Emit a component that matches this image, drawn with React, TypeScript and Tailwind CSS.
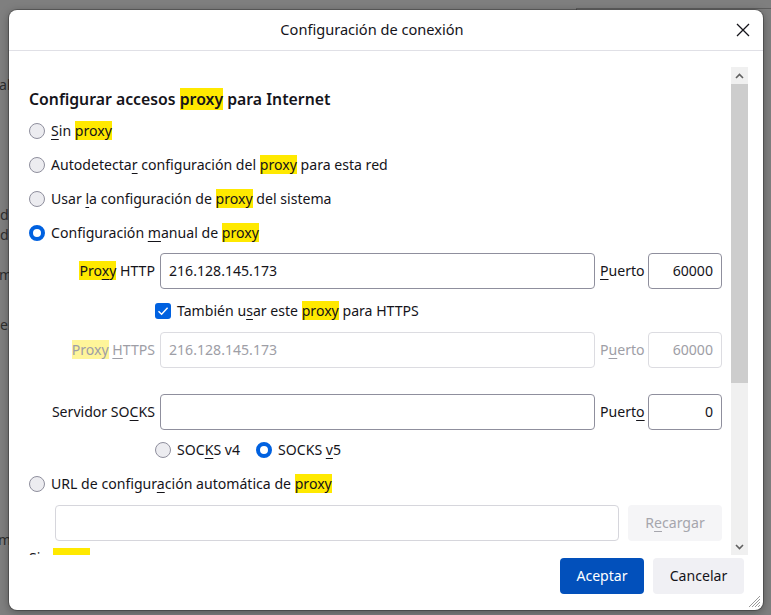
import React from "react";

const font = { fontFamily: '"Noto Sans", "Open Sans", sans-serif' };

function Hl({ children, pale }: { children: React.ReactNode; pale?: boolean }) {
  return <span className={pale ? "bg-[#fff59a]" : "bg-[#ffe900]"}>{children}</span>;
}

function K({ children }: { children: React.ReactNode }) {
  return <span className="underline underline-offset-[3px] decoration-1">{children}</span>;
}

function Radio({ checked }: { checked?: boolean }) {
  return checked ? (
    <span className="box-border h-4 w-4 shrink-0 rounded-full border-[4px] border-[#0061e0] bg-white" />
  ) : (
    <span className="box-border h-4 w-4 shrink-0 rounded-full border border-[#8f8f9d] bg-[#ececf0]" />
  );
}

function RadioRow({ checked, children, className = "" }: { checked?: boolean; children: React.ReactNode; className?: string }) {
  return (
    <div className={`flex h-6 items-center gap-[6px] ${className}`}>
      <Radio checked={checked} />
      <span className="leading-6">{children}</span>
    </div>
  );
}

function Field({ value, disabled, right }: { value?: string; disabled?: boolean; right?: boolean }) {
  return (
    <div
      className={`flex h-9 items-center rounded-[4px] border px-2 ${right ? "justify-end" : ""} ${
        disabled ? "border-[#dcdce1] text-[#9e9ea6]" : "border-[#8f8f9d] text-[#15141a]"
      }`}
    >
      {value}
    </div>
  );
}

function ProxyRow({
  label,
  value,
  port,
  portLabel,
  disabled,
  className = "",
}: {
  label: React.ReactNode;
  value?: string;
  port: string;
  portLabel: React.ReactNode;
  disabled?: boolean;
  className?: string;
}) {
  return (
    <div className={`flex items-center gap-[5px] ${className} ${disabled ? "text-[#9e9ea6]" : ""}`}>
      <div className="w-[126px] shrink-0 text-right whitespace-nowrap">{label}</div>
      <div className="flex-1">
        <Field value={value} disabled={disabled} />
      </div>
      <div className="w-[43px] shrink-0 whitespace-nowrap">{portLabel}</div>
      <div className="w-[74px] shrink-0">
        <Field value={port} disabled={disabled} right />
      </div>
    </div>
  );
}

export default function App() {
  return (
    <div className="relative h-[615px] w-[771px] overflow-hidden bg-[#7f7f7f] text-[14.1px] text-[#15141a]" style={font}>
      {/* page behind the dialog */}
      <div className="absolute left-[576px] right-0 top-[8px] h-[40px] border-t border-l border-[#5e5e5e]" />
      <div className="text-[#2e2e2e]">
        <span className="absolute left-[-1px] top-[74px]">al</span>
        <span className="absolute left-0 top-[204px]">d.</span>
        <span className="absolute left-0 top-[224px]">da</span>
        <span className="absolute left-[-1px] top-[264px]">mi</span>
        <span className="absolute left-0 top-[314px]">e</span>
        <span className="absolute left-[-2px] top-[529px]">m</span>
        <span className="absolute left-[14px] top-[566px]">c</span>
      </div>

      {/* dialog */}
      <div className="absolute left-[9px] top-[10px] flex h-[600px] w-[754px] flex-col rounded-lg bg-white shadow-[0_0_0_1px_rgba(0,0,0,0.25),0_2px_10px_rgba(0,0,0,0.35)]">
        <div className="relative flex h-[41px] shrink-0 items-center justify-center border-b border-[#e0e0e6] pr-[28px]">
          <span className="text-[14.6px]">Configuración de conexión</span>
          <button className="absolute right-[12px] top-[12px] flex h-4 w-4 items-center justify-center">
            <svg width="14" height="14" viewBox="0 0 14 14" fill="none" stroke="#15141a" strokeWidth="1.3">
              <path d="M1 1 L13 13 M13 1 L1 13" />
            </svg>
          </button>
        </div>

        <div className="flex h-[504px] shrink-0 overflow-hidden">
          <div className="flex-1 overflow-hidden pl-5 pr-[9px] pt-9">
            <h1 className="h-6 text-[15.8px] font-semibold leading-6">
              Configurar accesos <Hl>proxy</Hl> para Internet
            </h1>
            <RadioRow className="mt-2">
              <K>S</K>in <Hl>proxy</Hl>
            </RadioRow>
            <RadioRow className="mt-[10px]">
              Autodetecta<K>r</K> configuración del <Hl>proxy</Hl> para esta red
            </RadioRow>
            <RadioRow className="mt-[10px]">
              Usar <K>l</K>a configuración de <Hl>proxy</Hl> del sistema
            </RadioRow>
            <RadioRow checked className="mt-[10px]">
              Configuración <K>m</K>anual de <Hl>proxy</Hl>
            </RadioRow>

            <ProxyRow
              className="mt-2"
              label={
                <>
                  <Hl>
                    Pro<K>x</K>y
                  </Hl>{" "}
                  HTTP
                </>
              }
              value="216.128.145.173"
              portLabel={
                <>
                  <K>P</K>uerto
                </>
              }
              port="60000"
            />

            <div className="mt-[10px] flex h-6 items-center gap-[6px] pl-[126px]">
              <span className="flex h-4 w-4 shrink-0 items-center justify-center rounded-[3px] bg-[#0061e0]">
                <svg width="12" height="12" viewBox="0 0 12 12" fill="none" stroke="white" strokeWidth="1.4">
                  <path d="M1.5 6.2 L4.6 9.2 L10.6 2.8" />
                </svg>
              </span>
              <span>
                También u<K>s</K>ar este <Hl>proxy</Hl> para HTTPS
              </span>
            </div>

            <ProxyRow
              className="mt-[9px]"
              disabled
              label={
                <>
                  <Hl pale>Proxy</Hl> <K>H</K>TTPS
                </>
              }
              value="216.128.145.173"
              portLabel={
                <>
                  P<K>u</K>erto
                </>
              }
              port="60000"
            />

            <ProxyRow
              className="mt-[26px]"
              label={
                <>
                  Servidor SO<K>C</K>KS
                </>
              }
              value=""
              portLabel={
                <>
                  Puert<K>o</K>
                </>
              }
              port="0"
            />

            <div className="mt-2 flex h-6 items-center pl-[126px]">
              <RadioRow>
                SOC<K>K</K>S v4
              </RadioRow>
              <RadioRow checked className="ml-[16px]">
                SOCKS <K>v</K>5
              </RadioRow>
            </div>

            <RadioRow className="mt-[10px]">
              URL de configur<K>a</K>ción automática de <Hl>proxy</Hl>
            </RadioRow>

            <div className="mt-[9px] flex gap-[9px] pl-[26px]">
              <div className="h-9 flex-1 rounded-[4px] border border-[#d6d6dc]" />
              <button className="h-9 w-[94px] rounded-[4px] bg-[#f5f5f7] text-[#a6a6ad]">
                R<K>e</K>cargar
              </button>
            </div>

            <div className="mt-[5px] h-6 leading-6">
              Sin <Hl>proxy</Hl> para
            </div>
          </div>

          {/* scrollbar */}
          <div className="mr-[15px] mt-4 flex w-[17px] shrink-0 flex-col bg-[#f0f0f0]">
            <div className="flex h-[17px] items-center justify-center">
              <svg width="9" height="6" viewBox="0 0 9 6" fill="none" stroke="#606060" strokeWidth="1.6">
                <path d="M1 5 L4.5 1.5 L8 5" />
              </svg>
            </div>
            <div className="h-[299px] bg-[#cdcdcd]" />
            <div className="flex-1" />
            <div className="flex h-[17px] items-center justify-center">
              <svg width="9" height="6" viewBox="0 0 9 6" fill="none" stroke="#606060" strokeWidth="1.6">
                <path d="M1 1 L4.5 4.5 L8 1" />
              </svg>
            </div>
          </div>
        </div>

        <div className="relative flex flex-1 items-start justify-end gap-[9px] pr-[19px] pt-[3px]">
          <button className="h-9 w-[84px] rounded-[4px] bg-[#0250bb] text-white">Aceptar</button>
          <button className="h-9 w-[91px] rounded-[4px] bg-[#f0f0f4] text-[#15141a]">Cancelar</button>
          <svg className="absolute bottom-[2px] right-[2px]" width="12" height="12" viewBox="0 0 12 12" stroke="#9a9a9a" strokeWidth="1">
            <path d="M11 3 L3 11 M11 6 L6 11 M11 9 L9 11 M11 0 L0 11" />
          </svg>
        </div>
      </div>
    </div>
  );
}
